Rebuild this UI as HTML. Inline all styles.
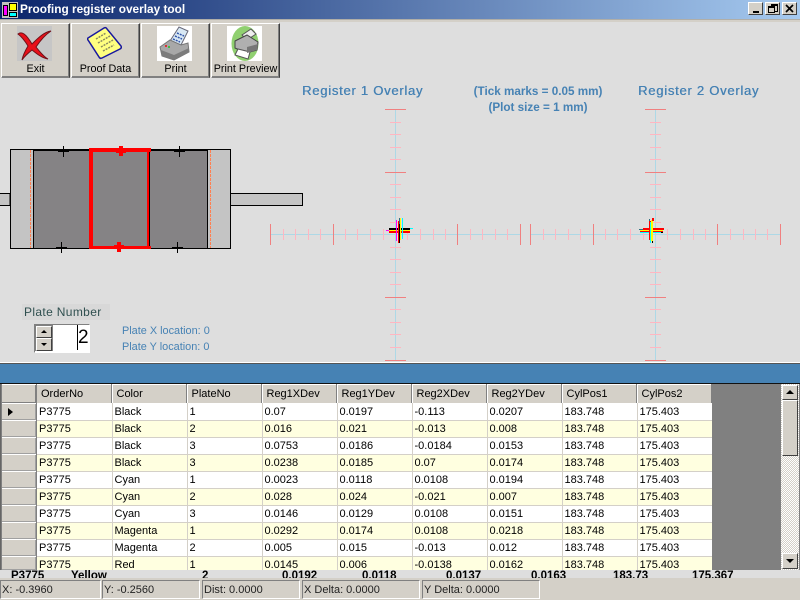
<!DOCTYPE html>
<html><head><meta charset="utf-8"><style>
html,body{margin:0;padding:0;width:800px;height:600px;overflow:hidden;background:#dedede;font-family:"Liberation Sans",sans-serif;font-size:11px;color:#000}
.a{position:absolute}
.btn{position:absolute;top:23px;width:67px;height:53px;background:#d4d0c8;border:1px solid;border-color:#fff #404040 #808080 #fff;box-shadow:inset -1px -1px 0 #808080;text-align:center;}
.btn span{position:absolute;left:-2px;right:-2px;top:39px;font-size:10.8px;white-space:nowrap}
.wb{position:absolute;top:2px;width:13px;height:11px;background:#d4d0c8;border:1px solid;border-color:#fff #404040 #404040 #fff}
.st{position:absolute;top:580px;height:17px;line-height:18px;border:1px solid;border-color:#808080 #fff #fff #808080;padding-left:1px;white-space:nowrap;font-size:11px;color:#222}
table{border-collapse:collapse;table-layout:fixed;position:absolute;left:37px;top:384px;width:675px}
td,th{width:75px;height:16px;padding:0 0 0 2px;box-sizing:border-box;font-weight:normal;text-align:left;font-size:11px;white-space:nowrap;overflow:hidden}
th{height:19px;background:#d4d0c8;border-right:1px solid #fff;padding-left:4px;box-shadow:inset -1px 0 0 #808080,inset 0 1px 0 #fff}
td{height:17px;padding-top:1px;border-right:1px solid #d4d0c8;border-bottom:1px solid #d4d0c8;background:#fff}
tr.y td{background:#ffffe0}
.rh{position:absolute;left:2px;width:34px;height:16px;background:#d4d0c8;border-top:1px solid #fff;border-bottom:0;box-shadow:inset -1px -1px 0 #a0a0a0}
.b{position:absolute;top:0;font-weight:bold;font-size:11.5px;white-space:nowrap}
.blue{color:#4682b4}
.h{font-size:13px;letter-spacing:.75px;white-space:nowrap;text-shadow:.35px 0 #4682b4}
</style></head><body>
<!-- title bar -->
<div class="a" style="left:0;top:0;width:800px;height:19px;background:linear-gradient(90deg,#0a246a,#a6caf0)"></div>
<div class="a" style="left:0;top:19px;width:800px;height:3px;background:#d4d0c8;border-top:1px solid #b0aea8;box-sizing:border-box"></div>
<svg class="a" style="left:2px;top:2px" width="16" height="16" shape-rendering="crispEdges"><rect width="16" height="16" fill="#c0c0c0"/><rect x="7.5" y="1.5" width="7" height="7" fill="#ff0" stroke="#000"/><rect x="1.5" y="3.5" width="4" height="10" fill="#f0f" stroke="#000"/><rect x="7.5" y="10.5" width="7" height="4" fill="#0ff" stroke="#000"/></svg>
<div class="a" style="left:20px;top:1px;color:#fff;font-weight:bold;font-size:11.85px;line-height:16px;white-space:nowrap">Proofing register overlay tool</div>
<div class="wb" style="left:748px"><div class="a" style="left:4px;top:8px;width:6px;height:2px;background:#000"></div></div>
<div class="wb" style="left:765px"><div class="a" style="left:5px;top:1px;width:5px;height:5px;border:1px solid #000;border-top-width:2px"></div><div class="a" style="left:2px;top:3px;width:5px;height:4px;border:1px solid #000;border-top-width:2px;background:#d4d0c8"></div></div>
<div class="wb" style="left:782px"><svg class="a" style="left:2px;top:1px" width="9" height="9"><path d="M1 1L8 8M8 1L1 8" stroke="#000" stroke-width="1.7"/></svg></div>

<!-- toolbar -->
<div class="a" style="left:0;top:22px;width:280px;height:55px;background:#d4d0c8"></div>
<div class="btn" style="left:1px"><span>Exit</span></div>
<div class="btn" style="left:71px"><span>Proof Data</span></div>
<div class="btn" style="left:141px"><span>Print</span></div>
<div class="btn" style="left:211px"><span>Print Preview</span></div>

<svg class="a" style="left:17px;top:26px" width="35" height="35"><rect width="35" height="35" fill="#c6c6c6"/><path d="M1 8C5 5 9 8 15 18C21 12 27 6 34 5C28 9 23 15 19 21C23 26 27 31 31 33C25 32 20 28 15 24C10 28 7 31 5 34C6 29 8 25 11 20C8 15 5 11 1 8Z" fill="#e8101a" stroke="#701018" stroke-width="1"/></svg>
<svg class="a" style="left:87px;top:26px" width="35" height="35"><path d="M1 12L17 2Q19 1 20 3L34 20Q35 22 33 23L15 32Q13 33 12 31L1 14Q0 13 1 12Z" fill="#ffff80" stroke="#1818a0" stroke-width="1.5"/><path d="M9 13L19 7M11 17L23 10M14 21L26 14M16 25L27 19" stroke="#8a8a60" stroke-width="1.5" stroke-dasharray="2 1"/></svg>
<svg class="a" style="left:157px;top:26px" width="35" height="35"><rect width="35" height="35" fill="#fff"/><path d="M13 15L22 1L31 5L24 19Z" fill="#d8e8f4" stroke="#667"/><path d="M20 7L27 10M18 10L25 13M16 13L23 16" stroke="#35a" stroke-width="1.5" stroke-dasharray="2 1"/><path d="M3 21L13 14L24 19L31 17L32 26L17 34L5 30Z" fill="#a8a8a8" stroke="#777"/><path d="M4 24L17 29L32 22L32 26L17 34L5 30Z" fill="#7c7c7c"/><rect x="8" y="19" width="2" height="2" fill="#d33"/><rect x="11" y="20" width="2" height="2" fill="#4b4"/></svg>
<svg class="a" style="left:227px;top:26px" width="35" height="35"><rect width="35" height="35" fill="#fff"/><ellipse cx="18" cy="17.5" rx="13.5" ry="17.5" fill="#90d070"/><path d="M15 9L24 3L29 8L20 14Z" fill="#eee" stroke="#555"/><path d="M8 15L20 9L31 16L30 24L19 27L8 22Z" fill="#b0b0b0" stroke="#444"/><path d="M11 23L8 29L21 33L23 26Z" fill="#fff" stroke="#555"/><path d="M20 27L30 24L31 18L20 21Z" fill="#777"/></svg>

<!-- plate diagram & overlays -->
<svg class="a" style="left:0;top:0" width="800" height="362" shape-rendering="crispEdges">
<rect x="-3" y="193.5" width="13" height="12" fill="#c4c4c4" stroke="#000"/>
<rect x="230.5" y="193.5" width="72" height="12" fill="#c4c4c4" stroke="#000"/>
<rect x="10.5" y="149.5" width="220" height="99" fill="#c4c4c4" stroke="#000"/>
<rect x="33.5" y="150.5" width="174" height="98" fill="#858385" stroke="#000"/>
<path d="M30.5 150V248M210.5 150V248" stroke="#ff7f50" stroke-dasharray="3 1"/>
<path d="M63.5 146V157M58 151.5H69M179.5 146V157M174 151.5H185M61.5 242V253M56 247.5H67M177.5 242V253M172 247.5H183" stroke="#000"/>
<rect x="89" y="148" width="62" height="4" fill="#f00"/>
<rect x="89" y="246" width="62" height="3" fill="#f00"/>
<rect x="89" y="148" width="4" height="101" fill="#f00"/>
<rect x="147" y="148" width="2" height="101" fill="#f00"/>
<rect x="149" y="152" width="1" height="94" fill="#000"/>
<path d="M121 146V156M116 151H126M119 242V252M114 247H124" stroke="#f00" stroke-width="4"/>

<!-- axes -->
<path d="M270 234.5H520M530 234.5H780M395.5 109V360M655.5 109V360" stroke="#add8e6"/>
<path d="M390 122.5h11M390 134.5h11M390 147.5h11M390 159.5h11M390 184.5h11M390 197.5h11M390 209.5h11M390 222.5h11M390 247.5h11M390 259.5h11M390 272.5h11M390 284.5h11M390 309.5h11M390 322.5h11M390 334.5h11M390 347.5h11M650 122.5h11M650 134.5h11M650 147.5h11M650 159.5h11M650 184.5h11M650 197.5h11M650 209.5h11M650 222.5h11M650 247.5h11M650 259.5h11M650 272.5h11M650 284.5h11M650 309.5h11M650 322.5h11M650 334.5h11M650 347.5h11" stroke="#ffb6c1"/>
<path d="M283.5 229v11M295.5 229v11M308.5 229v11M320.5 229v11M345.5 229v11M357.5 229v11M370.5 229v11M383.5 229v11M407.5 229v11M420.5 229v11M433.5 229v11M445.5 229v11M470.5 229v11M482.5 229v11M495.5 229v11M507.5 229v11M543.5 229v11M555.5 229v11M568.5 229v11M580.5 229v11M605.5 229v11M617.5 229v11M630.5 229v11M643.5 229v11M667.5 229v11M680.5 229v11M693.5 229v11M705.5 229v11M730.5 229v11M743.5 229v11M755.5 229v11M767.5 229v11" stroke="#ffb6c1"/>
<path d="M385 109.5h21M385 172.5h21M385 297.5h21M385 360.5h21M645 109.5h21M645 172.5h21M645 297.5h21M645 360.5h21M270.5 224v21M333.5 224v21M457.5 224v21M520.5 224v21M530.5 224v21M593.5 224v21M717.5 224v21M780.5 224v21" stroke="#f08080"/>

<!-- reg 1 cross -->
<rect x="386" y="230" width="20" height="1" fill="#f0f"/>
<rect x="389" y="228" width="24" height="1" fill="#0ff"/>
<rect x="389" y="228" width="21" height="2" fill="#000"/>
<rect x="389" y="230" width="21" height="1" fill="#ff0"/>
<rect x="389" y="231" width="21" height="2" fill="#f00"/>
<rect x="396" y="220" width="1" height="21" fill="#f0f"/>
<rect x="398" y="221" width="2" height="22" fill="#f00"/>
<rect x="399" y="218" width="1" height="25" fill="#2f6f80"/>
<rect x="400" y="218" width="1" height="22" fill="#ff0"/>
<rect x="402" y="218" width="1" height="21" fill="#0ff"/>
<rect x="399" y="224" width="1" height="19" fill="#000"/>
<!-- reg 2 cross -->
<rect x="639" y="229" width="22" height="1" fill="#2f6f80"/>
<rect x="643" y="228" width="21" height="2" fill="#f00"/>
<rect x="640" y="230" width="23" height="1" fill="#ff0"/>
<rect x="640" y="231" width="23" height="1" fill="#f00"/>
<rect x="640" y="232" width="22" height="1" fill="#0ff"/>
<rect x="661" y="232" width="2" height="1" fill="#000"/>
<rect x="649" y="219" width="1" height="21" fill="#2f6f80"/>
<rect x="649" y="221" width="2" height="19" fill="#f00"/>
<rect x="650" y="222" width="1" height="21" fill="#0ff"/>
<rect x="651" y="220" width="2" height="21" fill="#ff0"/>
<rect x="652" y="218" width="2" height="3" fill="#f00"/>
<rect x="652" y="241" width="1" height="2" fill="#000"/>
</svg>

<!-- headings -->
<div class="a blue h" style="left:302px;top:83px">Register 1 Overlay</div>
<div class="a blue h" style="left:638px;top:83px">Register 2 Overlay</div>
<div class="a blue" style="left:448px;top:84px;width:180px;text-align:center;font-weight:bold;font-size:11.7px;line-height:16px;white-space:nowrap">(Tick marks = 0.05 mm)<br>(Plot size = 1 mm)</div>

<!-- plate number -->
<div class="a" style="left:22px;top:304px;width:88px;height:16px;background:#d8d8d8;color:#2f4f4f;font-size:12px;line-height:17px;letter-spacing:.35px;padding-left:2px;box-sizing:border-box;white-space:nowrap">Plate Number</div>
<div class="a" style="left:34px;top:324px;width:56px;height:29px;background:#fff;box-sizing:border-box;border:1px solid;border-color:#808080 #fff #fff #808080"></div>
<div class="a" style="left:35px;top:325px;width:18px;height:26px;background:#808080"></div>
<div class="a" style="left:36px;top:326px;width:16px;height:12px;background:#d4d0c8;border:1px solid;border-color:#fff #404040 #404040 #fff;box-sizing:border-box"><div class="a" style="left:4px;top:3px;border:3px solid transparent;border-bottom:3px solid #000;border-top:0"></div></div>
<div class="a" style="left:36px;top:338px;width:16px;height:13px;background:#d4d0c8;border:1px solid;border-color:#fff #404040 #404040 #fff;box-sizing:border-box"><div class="a" style="left:4px;top:4px;border:3px solid transparent;border-top:3px solid #000;border-bottom:0"></div></div>
<div class="a" style="left:77px;top:325px;width:1px;height:25px;background:#000"></div>
<div class="a" style="left:78px;top:328px;font-size:19px;line-height:20px">2</div>
<div class="a blue" style="left:122px;top:323px;font-size:10.9px;line-height:16px;white-space:nowrap">Plate X location: 0</div>
<div class="a blue" style="left:122px;top:339px;font-size:10.9px;line-height:16px;white-space:nowrap">Plate Y location: 0</div>

<!-- grid -->
<div class="a" style="left:0;top:362px;width:800px;height:1px;background:#fff"></div>
<div class="a" style="left:0;top:363px;width:800px;height:1px;background:#555"></div>
<div class="a" style="left:0;top:364px;width:800px;height:19px;background:#4682b4"></div>
<div class="a" style="left:0;top:383px;width:800px;height:1px;background:#111"></div>
<div class="a" style="left:0;top:384px;width:800px;height:186px;background:#808080;overflow:hidden">
<div class="a" style="left:0;top:0;width:1px;height:186px;background:#666"></div>
</div>
<div class="a" style="left:2px;top:384px;width:34px;height:19px;background:#d4d0c8;border-top:1px solid #fff;box-sizing:border-box;box-shadow:inset -1px -1px 0 #808080"></div>
<div class="a" style="left:36px;top:384px;width:1px;height:186px;background:#808080"></div>
<div class="rh" style="top:403px"><div class="a" style="left:6px;top:4px;border:4px solid transparent;border-left:5px solid #000;border-right:0"></div></div>
<div class="rh" style="top:420px"></div><div class="rh" style="top:437px"></div><div class="rh" style="top:454px"></div><div class="rh" style="top:471px"></div><div class="rh" style="top:488px"></div><div class="rh" style="top:505px"></div><div class="rh" style="top:522px"></div><div class="rh" style="top:539px"></div><div class="rh" style="top:556px;height:13px"></div>
<div class="a" style="left:0;top:384px;width:712px;height:186px;overflow:hidden">
<table style="left:37px;top:0">
<tr><th>OrderNo</th><th>Color</th><th>PlateNo</th><th>Reg1XDev</th><th>Reg1YDev</th><th>Reg2XDev</th><th>Reg2YDev</th><th>CylPos1</th><th>CylPos2</th></tr>
<tr><td>P3775</td><td>Black</td><td>1</td><td>0.07</td><td>0.0197</td><td>-0.113</td><td>0.0207</td><td>183.748</td><td>175.403</td></tr>
<tr class="y"><td>P3775</td><td>Black</td><td>2</td><td>0.016</td><td>0.021</td><td>-0.013</td><td>0.008</td><td>183.748</td><td>175.403</td></tr>
<tr><td>P3775</td><td>Black</td><td>3</td><td>0.0753</td><td>0.0186</td><td>-0.0184</td><td>0.0153</td><td>183.748</td><td>175.403</td></tr>
<tr class="y"><td>P3775</td><td>Black</td><td>3</td><td>0.0238</td><td>0.0185</td><td>0.07</td><td>0.0174</td><td>183.748</td><td>175.403</td></tr>
<tr><td>P3775</td><td>Cyan</td><td>1</td><td>0.0023</td><td>0.0118</td><td>0.0108</td><td>0.0194</td><td>183.748</td><td>175.403</td></tr>
<tr class="y"><td>P3775</td><td>Cyan</td><td>2</td><td>0.028</td><td>0.024</td><td>-0.021</td><td>0.007</td><td>183.748</td><td>175.403</td></tr>
<tr><td>P3775</td><td>Cyan</td><td>3</td><td>0.0146</td><td>0.0129</td><td>0.0108</td><td>0.0151</td><td>183.748</td><td>175.403</td></tr>
<tr class="y"><td>P3775</td><td>Magenta</td><td>1</td><td>0.0292</td><td>0.0174</td><td>0.0108</td><td>0.0218</td><td>183.748</td><td>175.403</td></tr>
<tr><td>P3775</td><td>Magenta</td><td>2</td><td>0.005</td><td>0.015</td><td>-0.013</td><td>0.012</td><td>183.748</td><td>175.403</td></tr>
<tr class="y"><td>P3775</td><td>Red</td><td>1</td><td>0.0145</td><td>0.006</td><td>-0.0138</td><td>0.0162</td><td>183.748</td><td>175.403</td></tr>
</table></div>

<!-- scrollbar -->
<div class="a" style="left:781px;top:384px;width:18px;height:186px;background:repeating-conic-gradient(#fff 0 25%,#d4d0c8 0 50%) 0 0/2px 2px"></div>
<div class="a" style="left:782px;top:385px;width:16px;height:15px;background:#d4d0c8;border:1px solid;border-color:#fff #404040 #404040 #fff;box-sizing:border-box"><div class="a" style="left:3px;top:4px;border:4px solid transparent;border-bottom:4px solid #000;border-top:0"></div></div>
<div class="a" style="left:782px;top:400px;width:16px;height:56px;background:#d4d0c8;border:1px solid;border-color:#fff #404040 #404040 #fff;box-sizing:border-box"></div>
<div class="a" style="left:782px;top:553px;width:16px;height:16px;background:#d4d0c8;border:1px solid;border-color:#fff #404040 #404040 #fff;box-sizing:border-box"><div class="a" style="left:3px;top:5px;border:4px solid transparent;border-top:4px solid #000;border-bottom:0"></div></div>

<!-- clipped bold row -->
<div class="a" style="left:0;top:570px;width:800px;height:8px;background:#dedede;overflow:hidden">
<div class="b" style="left:11px">P3775</div><div class="b" style="left:71px">Yellow</div><div class="b" style="left:202px">2</div><div class="b" style="left:282px">0.0192</div><div class="b" style="left:362px">0.0118</div><div class="b" style="left:446px">0.0137</div><div class="b" style="left:531px">0.0163</div><div class="b" style="left:613px">183.73</div><div class="b" style="left:692px">175.367</div>
</div>

<!-- status bar -->
<div class="a" style="left:0;top:578px;width:800px;height:22px;background:#d4d0c8"></div>
<div class="st" style="left:0;width:98px">X: -0.3960</div>
<div class="st" style="left:102px;width:95px">Y: -0.2560</div>
<div class="st" style="left:202px;width:95px">Dist: 0.0000</div>
<div class="st" style="left:302px;width:115px">X Delta: 0.0000</div>
<div class="st" style="left:422px;width:115px">Y Delta: 0.0000</div>
</body></html>
